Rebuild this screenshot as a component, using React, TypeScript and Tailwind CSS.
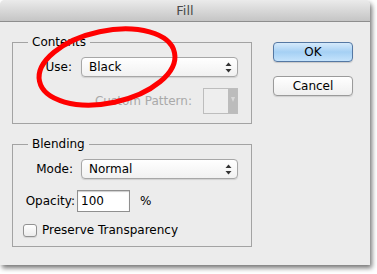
import React from "react";

const font = { fontFamily: '"DejaVu Sans", "Liberation Sans", sans-serif' };

function SelectArrows() {
  return (
    <svg width="7" height="11" viewBox="0 0 7 11" className="shrink-0">
      <path d="M3.5 0.5 L6.5 4 L0.5 4 Z" fill="#333" />
      <path d="M3.5 10.5 L6.5 7 L0.5 7 Z" fill="#333" />
    </svg>
  );
}

function PopupSelect({ value, width }: { value: string; width: string }) {
  return (
    <div
      className={`${width} h-[20px] flex items-center justify-between rounded-[4px] border border-[#a7a7a7] bg-gradient-to-b from-[#ffffff] to-[#f1f1f1] pl-[7px] pr-[5px] shadow-[0_1px_1px_rgba(0,0,0,0.12)]`}
    >
      <span className="text-[12px] text-black leading-none">{value}</span>
      <SelectArrows />
    </div>
  );
}

function GroupBox({
  title,
  className,
  children,
}: {
  title: string;
  className?: string;
  children: React.ReactNode;
}) {
  return (
    <fieldset className={`border border-[#a3a3a3] ${className ?? ""}`}>
      <legend className="ml-[15px] px-[4px] text-[12px] leading-[16px] text-black">
        {title}
      </legend>
      {children}
    </fieldset>
  );
}

export default function App() {
  return (
    <div className="relative w-[377px] h-[274px] bg-white overflow-hidden" style={font}>
      <div className="w-[370px] h-[265px] bg-[#ececec] rounded-t-[5px] shadow-[2px_3px_5px_rgba(0,0,0,0.55)] flex flex-col">
        {/* title bar */}
        <div className="h-[22px] shrink-0 rounded-t-[5px] border-b border-[#8e8e8e] bg-gradient-to-b from-[#ebebeb] to-[#c5c5c5] text-center text-[13px] leading-[21px] text-[#4a4a4a]">
          Fill
        </div>

        <div className="flex pl-[12px] pt-[12px]">
          <div className="w-[240px] flex flex-col">
            <GroupBox title="Contents" className="pb-[9px]">
              <div className="flex items-center h-[20px] mt-[7px]">
                <span className="w-[59px] text-right text-[12px] text-black">Use:</span>
                <div className="ml-[9px]">
                  <PopupSelect value="Black" width="w-[157px]" />
                </div>
              </div>
              <div className="flex items-center h-[26px] mt-[11px]">
                <span className="w-[179px] text-right text-[12px] text-[#a9a9a9]">
                  Custom Pattern:
                </span>
                <div className="ml-[11px] w-[35px] h-[26px] flex border border-[#bdbdbd] bg-[#eeeeee]">
                  <div className="flex-1" />
                  <div className="w-[9px] bg-[#bcbcbc] flex justify-center pt-[8px]">
                    <svg width="4" height="6" viewBox="0 0 4 6">
                      <path d="M0 0 H4 L2 5 Z" fill="#d8d8d8" />
                    </svg>
                  </div>
                </div>
              </div>
            </GroupBox>

            <GroupBox title="Blending" className="mt-[12px] pb-[8px]">
              <div className="flex items-center h-[20px] mt-[7px]">
                <span className="w-[60px] text-right text-[12px] text-black">Mode:</span>
                <div className="ml-[8px]">
                  <PopupSelect value="Normal" width="w-[157px]" />
                </div>
              </div>
              <div className="flex items-center h-[22px] mt-[11px]">
                <span className="w-[62px] text-right text-[12px] text-black">Opacity:</span>
                <div className="ml-[2px] w-[53px] h-[22px] flex items-center border border-[#8f8f8f] bg-white pl-[3px] shadow-[inset_0_1px_1px_rgba(0,0,0,0.2)] text-[12px] text-black">
                  100
                </div>
                <span className="ml-[10px] text-[12px] text-black">%</span>
              </div>
              <div className="flex items-center h-[16px] mt-[10px] pl-[10px]">
                <div className="w-[14px] h-[13px] rounded-[3px] border border-[#929292] bg-gradient-to-b from-[#ffffff] to-[#ececec] shadow-[0_1px_1px_rgba(0,0,0,0.1)]" />
                <span className="ml-[5px] text-[12px] text-black">Preserve Transparency</span>
              </div>
            </GroupBox>
          </div>

          <div className="ml-[21px] mt-[8px] flex flex-col">
            <button
              type="button"
              className="w-[80px] h-[20px] rounded-[4px] border border-[#5578a3] bg-gradient-to-b from-[#d6eafb] via-[#a5d0f4] to-[#c4e3fc] text-[12px] leading-none text-black shadow-[0_1px_1px_rgba(0,0,0,0.15)]"
            >
              OK
            </button>
            <button
              type="button"
              className="mt-[14px] w-[80px] h-[20px] rounded-[4px] border border-[#9b9b9b] bg-gradient-to-b from-[#ffffff] to-[#efefef] text-[12px] leading-none text-black shadow-[0_1px_1px_rgba(0,0,0,0.12)]"
            >
              Cancel
            </button>
          </div>
        </div>
      </div>

      {/* red annotation ellipse */}
      <svg className="absolute inset-0 pointer-events-none" width="377" height="274">
        <ellipse
          cx="107"
          cy="67"
          rx="69"
          ry="36"
          transform="rotate(-12 107 67)"
          fill="none"
          stroke="#ff0000"
          strokeWidth="5"
        />
      </svg>
    </div>
  );
}
